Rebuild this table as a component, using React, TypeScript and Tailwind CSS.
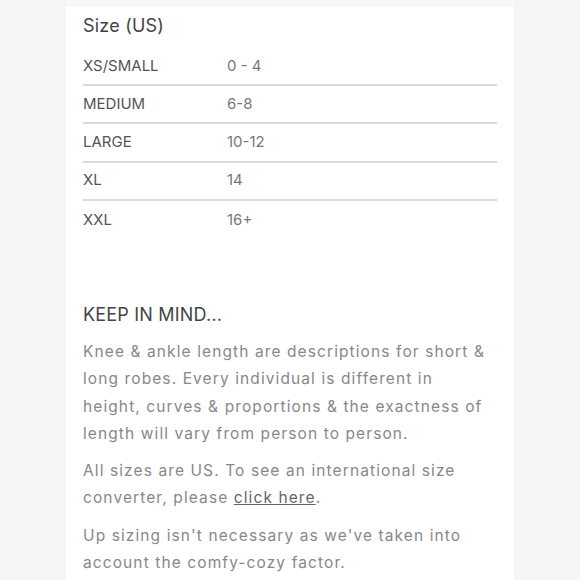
import React from "react";

const rows: [string, string][] = [
  ["XS/SMALL", "0 - 4"],
  ["MEDIUM", "6-8"],
  ["LARGE", "10-12"],
  ["XL", "14"],
  ["XXL", "16+"],
];

export default function App() {
  return (
    <div
      className="w-[580px] h-[580px] overflow-hidden bg-[#f6f6f6] flex justify-center"
      style={{ fontFamily: "Inter, 'Open Sans', sans-serif" }}
    >
      <div className="w-[448px] bg-white flex flex-col">
        <div className="h-[7px] bg-[#f8f8f8]" />
        <div className="pl-[17px] pr-[17px]">
          <div className="text-[18px] leading-[20px] text-[#444] mt-[9px] tracking-[0.2px]">Size (US)</div>
          <div className="mt-[12px]">
            {rows.map(([a, b], i) => (
              <div
                key={a}
                className={`flex items-center h-[38.2px] text-[15px] text-[#555] ${i < rows.length - 1 ? "border-b-2 border-[#dadada]" : ""}`}
              >
                <div className="w-[144px]">{a}</div>
                <div className="text-[#777]">{b}</div>
              </div>
            ))}
          </div>
          <div className="mt-[66px] text-[18px] leading-[20px] text-[#444] tracking-[0.2px]">KEEP IN MIND...</div>
          <div className="mt-[13px] w-[405px] text-[15.5px] leading-[27.3px] text-[#888] tracking-[1.1px]">
            <p>Knee &amp; ankle length are descriptions for short &amp; long robes. Every individual is different in height, curves &amp; proportions &amp; the exactness of length will vary from person to person.</p>
            <p className="mt-[10px]">All sizes are US. To see an international size converter, please <a className="underline text-[#666]">click here</a>.</p>
            <p className="mt-[10px]">Up sizing isn't necessary as we've taken into account the comfy-cozy factor.</p>
          </div>
        </div>
      </div>
    </div>
  );
}
